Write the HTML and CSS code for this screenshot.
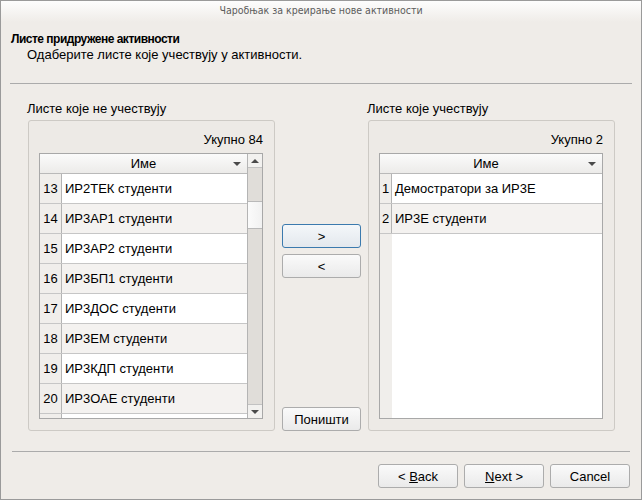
FILE: index.html
```html
<!DOCTYPE html>
<html lang="sr">
<head>
<meta charset="utf-8">
<title>Чаробњак за креирање нове активности</title>
<link rel="stylesheet" href="styles.css">
</head>
<body>
<div class="window">
  <div class="titlebar">Чаробњак за креирање нове активности</div>
  <div class="header">
    <div class="h-title">Листе придружене активности</div>
    <div class="h-sub">Одаберите листе које учествују у активности.</div>
  </div>
  <div class="sep top-sep"></div>
  <div class="main">
    <div class="col">
      <div class="grp-label">Листе које не учествују</div>
      <div class="group">
        <div class="count">Укупно 84</div>
        <div class="table">
          <div class="grid wide">
            <div class="thead"><span class="th-text">Име</span><span class="th-arrow"></span></div>
            <div class="rows">
              <div class="row"><span class="num">13</span><span class="name">ИР2ТЕК студенти</span></div>
              <div class="row alt"><span class="num">14</span><span class="name">ИР3АР1 студенти</span></div>
              <div class="row"><span class="num">15</span><span class="name">ИР3АР2 студенти</span></div>
              <div class="row alt"><span class="num">16</span><span class="name">ИР3БП1 студенти</span></div>
              <div class="row"><span class="num">17</span><span class="name">ИР3ДОС студенти</span></div>
              <div class="row alt"><span class="num">18</span><span class="name">ИР3ЕМ студенти</span></div>
              <div class="row"><span class="num">19</span><span class="name">ИР3КДП студенти</span></div>
              <div class="row alt"><span class="num">20</span><span class="name">ИР3ОАЕ студенти</span></div>
              <div class="row"><span class="num"></span><span class="name"></span></div>
            </div>
          </div>
          <div class="vscroll">
            <div class="sb-btn sb-up"><span class="tri-up"></span></div>
            <div class="sb-track"><div class="sb-thumb"></div></div>
            <div class="sb-btn sb-down"><span class="tri-down"></span></div>
          </div>
        </div>
      </div>
    </div>
    <div class="mid">
      <button class="btn focus">&gt;</button>
      <button class="btn second">&lt;</button>
      <button class="btn reset">Поништи</button>
    </div>
    <div class="col">
      <div class="grp-label">Листе које учествују</div>
      <div class="group">
        <div class="count">Укупно 2</div>
        <div class="table">
          <div class="grid narrow">
            <div class="thead"><span class="th-text">Име</span><span class="th-arrow"></span></div>
            <div class="rows">
              <div class="row"><span class="num">1</span><span class="name">Демостратори за ИР3Е</span></div>
              <div class="row alt"><span class="num">2</span><span class="name">ИР3Е студенти</span></div>
            </div>
          </div>
        </div>
      </div>
    </div>
  </div>
  <div class="sep bottom-sep"></div>
  <div class="footer">
    <button class="btn wiz">&lt; <u>B</u>ack</button>
    <button class="btn wiz"><u>N</u>ext &gt;</button>
    <button class="btn wiz">Cancel</button>
  </div>
</div>
</body>
</html>
```

FILE: styles.css
```css
html, body {
  margin: 0;
  padding: 0;
  background: #ffffff;
}

.window {
  width: 642px;
  height: 500px;
  box-sizing: border-box;
  border: 1px solid #9a9a9a;
  background: #efece8;
  display: flex;
  flex-direction: column;
  font-family: "Liberation Sans", Arial, sans-serif;
  font-size: 13px;
  color: #000;
  overflow: hidden;
}

.titlebar {
  height: 21px;
  line-height: 19px;
  text-align: center;
  font-family: "DejaVu Sans Condensed", "DejaVu Sans", sans-serif;
  font-stretch: condensed;
  font-size: 10.5px;
  color: #5c5c5c;
  background: linear-gradient(#fdfdfd, #efece8);
}

.header {
  padding: 9px 0 0 10px;
}

.h-title {
  font-family: "Liberation Sans", Arial, sans-serif;
  font-weight: bold;
  font-size: 12px;
  line-height: 16px;
  letter-spacing: -0.5px;
}

.h-sub {
  padding-left: 16px;
  line-height: 16px;
}

.sep {
  height: 1px;
  background: #ababab;
  flex-shrink: 0;
}

.top-sep {
  margin: 20px 9px 0;
}

.main {
  display: flex;
  padding: 17px 0 0 26px;
}

.col {
  width: 248px;
  display: flex;
  flex-direction: column;
}

.grp-label {
  line-height: 16px;
  margin-bottom: 3px;
}

.group {
  margin-left: 1px;
  box-sizing: border-box;
  height: 311px;
  border: 1px solid #cdcac5;
  border-radius: 3px;
  padding: 11px 11px 11px 10px;
  background: #edeae6;
}

.count {
  text-align: right;
  line-height: 16px;
  margin-bottom: 5px;
}

.table {
  height: 266px;
  box-sizing: border-box;
  border: 1px solid #a8a8a8;
  display: flex;
  background: #ffffff;
}

.grid {
  flex: 1;
  display: flex;
  flex-direction: column;
  overflow: hidden;
  --numw: 22px;
  background: linear-gradient(to right, #f0eeeb var(--numw), #ffffff var(--numw));
}

.grid.wide { --numw: 22px; }
.grid.narrow { --numw: 12px; }

.thead {
  height: 20px;
  box-sizing: border-box;
  border-bottom: 1px solid #b9b9b9;
  background: linear-gradient(#fbfbfb, #ecebe9);
  display: flex;
  align-items: center;
  padding-left: var(--numw);
  flex-shrink: 0;
}

.th-text {
  flex: 1;
  text-align: center;
  line-height: 19px;
}

.th-arrow {
  width: 0;
  height: 0;
  border-left: 4px solid transparent;
  border-right: 4px solid transparent;
  border-top: 4px solid #4a4a4a;
  margin: 0 6px 0 8px;
}

.rows {
  display: flex;
  flex-direction: column;
}

.row {
  height: 30px;
  box-sizing: border-box;
  display: flex;
  flex-shrink: 0;
  background: #ffffff;
  border-bottom: 1px solid #c6c6c6;
}

.row.alt {
  background: #f4f2f0;
}

.num {
  width: var(--numw);
  box-sizing: border-box;
  border-right: 1px solid #b4b4b4;
  background: #f0eeeb;
  text-align: center;
  line-height: 29px;
  flex-shrink: 0;
}

.name {
  padding-left: 3px;
  line-height: 29px;
  white-space: nowrap;
}

.vscroll {
  width: 15px;
  box-sizing: border-box;
  border-left: 1px solid #b4b4b4;
  display: flex;
  flex-direction: column;
  background: #e0ddd9;
}

.sb-btn {
  height: 14px;
  box-sizing: border-box;
  background: #f2f1ef;
  display: flex;
  align-items: center;
  justify-content: center;
  flex-shrink: 0;
}

.sb-up {
  border-bottom: 1px solid #c2c2c2;
}

.sb-down {
  border-top: 1px solid #c2c2c2;
}

.sb-track {
  flex: 1;
  display: flex;
  flex-direction: column;
}

.sb-thumb {
  margin-top: 33px;
  height: 28px;
  box-sizing: border-box;
  border-top: 1px solid #b9b9b9;
  border-bottom: 1px solid #b9b9b9;
  background: linear-gradient(to right, #fbfbfb, #f1f1f1);
}

.tri-up {
  width: 0;
  height: 0;
  border-left: 4px solid transparent;
  border-right: 4px solid transparent;
  border-bottom: 4px solid #4a4a4a;
}

.tri-down {
  width: 0;
  height: 0;
  border-left: 4px solid transparent;
  border-right: 4px solid transparent;
  border-top: 4px solid #4a4a4a;
}

.mid {
  width: 79px;
  margin: 0 6px 0 7px;
  display: flex;
  flex-direction: column;
  padding-top: 123px;
}

.btn {
  height: 24px;
  box-sizing: border-box;
  border: 1px solid #acacac;
  border-radius: 3px;
  background: linear-gradient(#fafafa, #eaeaea);
  font-family: "Liberation Sans", Arial, sans-serif;
  font-size: 13px;
  color: #000;
  padding: 0;
  margin: 0;
}

.btn.focus {
  border-color: #3b7aae;
  background: linear-gradient(#f4f7fa, #e3e8ed);
}

.btn.second {
  margin-top: 6px;
}

.btn.reset {
  margin-top: auto;
}

.bottom-sep {
  margin: 20px 11px 0 11px;
}

.footer {
  display: flex;
  justify-content: flex-end;
  gap: 6px;
  padding: 12px 11px 0 0;
}

.btn.wiz {
  width: 80px;
}
```
